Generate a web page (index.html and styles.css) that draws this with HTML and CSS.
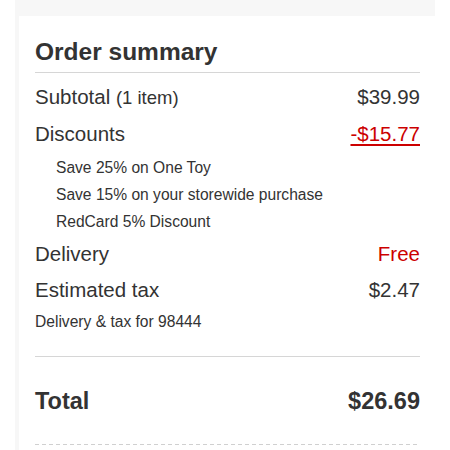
FILE: index.html
```html
<html>
	<head>
		<link rel="stylesheet" href="styles.css">
	</head>
	<body>
		<div class="page">
			<div class="card">
				<h2 class="title">Order summary</h2>
				<div class="rows">
					<div class="row">
						<span>Subtotal <small>(1 item)</small></span>
						<span>$39.99</span>
					</div>
					<div class="row">
						<span>Discounts</span>
						<a class="red" href="#">-$15.77</a>
					</div>
					<ul class="discounts">
						<li>Save 25% on One Toy</li>
						<li>Save 15% on your storewide purchase</li>
						<li>RedCard 5% Discount</li>
					</ul>
					<div class="row">
						<span>Delivery</span>
						<span class="red">Free</span>
					</div>
					<div class="row">
						<span>Estimated tax</span>
						<span>$2.47</span>
					</div>
					<p class="note">Delivery &amp; tax for 98444</p>
				</div>
				<div class="total">
					<span>Total</span>
					<span>$26.69</span>
				</div>
				<div class="dash"></div>
			</div>
		</div>
	</body>
</html>
```

FILE: styles.css
```css
* {
	margin: 0;
	padding: 0;
	box-sizing: border-box;
}

body {
	background: #fff;
	font-family: "Liberation Sans", Arial, sans-serif;
	color: #333;
}

.page {
	margin-left: 15px;
	width: 420px;
	height: 450px;
	background: #f7f7f7;
	padding: 16px 0 0 4px;
}

.card {
	background: #fff;
	height: 100%;
	padding: 21px 15px 0 16px;
}

.title {
	font-size: 24.5px;
	line-height: 30px;
	font-weight: bold;
	padding-bottom: 5px;
	border-bottom: 1px solid #d6d6d6;
}

.rows {
	padding: 6px 0 24px;
	border-bottom: 1px solid #d6d6d6;
}

.row {
	display: flex;
	justify-content: space-between;
	font-size: 20.5px;
	line-height: 24px;
	padding: 6px 0;
}

.row small {
	font-size: 18.5px;
}

.red {
	color: #cc0000;
}

a.red {
	text-decoration: underline;
	text-underline-offset: 3px;
}

.discounts {
	list-style: none;
	margin: 2px 0 1px;
	padding-left: 21px;
	font-size: 15.6px;
	line-height: 27px;
}

.note {
	margin-top: 4px;
	font-size: 15.6px;
	line-height: 20px;
}

.total {
	display: flex;
	justify-content: space-between;
	font-size: 23.5px;
	line-height: 28px;
	font-weight: bold;
	padding: 30px 0 29px;
}

.dash {
	height: 1px;
	background: repeating-linear-gradient(90deg, #d0d0d0 0 4px, transparent 4px 7px);
}
```
